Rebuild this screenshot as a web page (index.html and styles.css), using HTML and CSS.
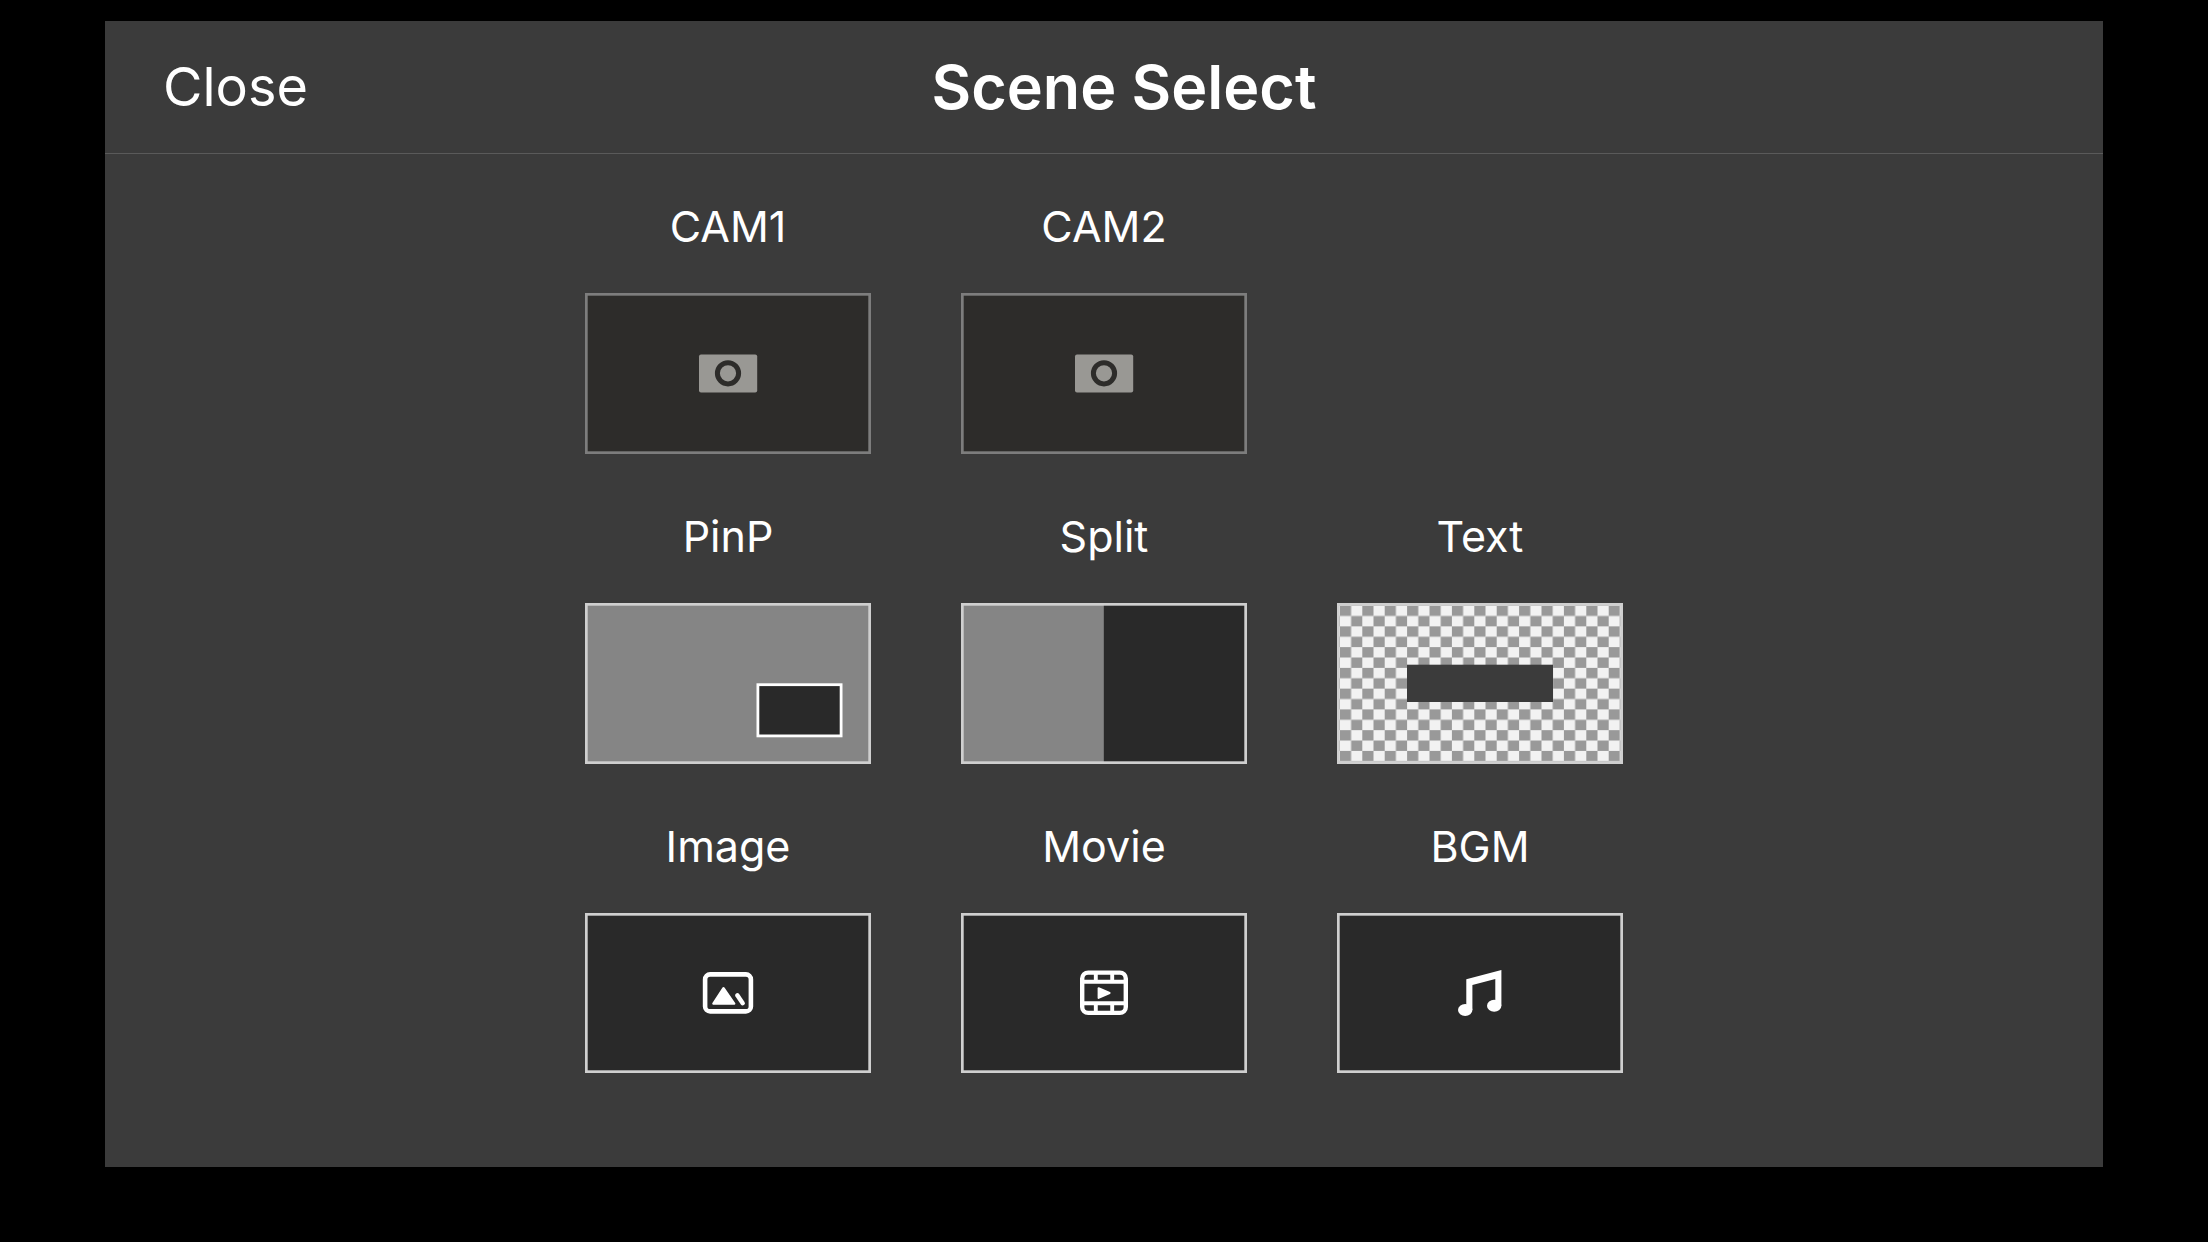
FILE: index.html
```html
<!DOCTYPE html>
<html lang="en">
<head>
<meta charset="utf-8">
<meta name="viewport" content="width=device-width, initial-scale=1">
<title>Scene Select</title>
<link rel="stylesheet" href="styles.css">
</head>
<body>
<main class="panel">
  <header class="bar">
    <button class="close" type="button">Close</button>
    <h1 class="title">Scene Select</h1>
  </header>
  <div class="scenes">
    <button class="scene" type="button">
      <span class="label">CAM1</span>
      <svg class="thumb" viewBox="0 0 286 161" aria-hidden="true">
        <rect class="frame frame-cam" x="1.35" y="1.35" width="283.3" height="158.3"/>
        <rect x="114" y="61.4" width="58.2" height="38.2" rx="2" fill="#999894"/>
        <circle cx="143" cy="80.3" r="10.6" fill="none" stroke="#2d2c2a" stroke-width="5"/>
      </svg>
    </button>
    <button class="scene" type="button">
      <span class="label">CAM2</span>
      <svg class="thumb" viewBox="0 0 286 161" aria-hidden="true">
        <rect class="frame frame-cam" x="1.35" y="1.35" width="283.3" height="158.3"/>
        <rect x="114" y="61.4" width="58.2" height="38.2" rx="2" fill="#999894"/>
        <circle cx="143" cy="80.3" r="10.6" fill="none" stroke="#2d2c2a" stroke-width="5"/>
      </svg>
    </button>
    <button class="scene row-start" type="button">
      <span class="label">PinP</span>
      <svg class="thumb" viewBox="0 0 286 161" aria-hidden="true">
        <rect class="frame frame-gray" x="1.35" y="1.35" width="283.3" height="158.3"/>
        <rect x="172.9" y="81.7" width="83.2" height="51.2" fill="#292929" stroke="#fff" stroke-width="2.8"/>
      </svg>
    </button>
    <button class="scene" type="button">
      <span class="label">Split</span>
      <svg class="thumb" viewBox="0 0 286 161" aria-hidden="true">
        <rect x="1" y="1" width="284" height="159" fill="#292929"/>
        <rect x="1" y="1" width="141.8" height="159" fill="#858585"/>
        <rect class="frame frame-open" x="1.35" y="1.35" width="283.3" height="158.3"/>
      </svg>
    </button>
    <button class="scene" type="button">
      <span class="label">Text</span>
      <svg class="thumb" viewBox="0 0 286 161" aria-hidden="true">
        <defs>
          <pattern id="checker" x="2.9" y="2.6" width="22.4" height="20.76" patternUnits="userSpaceOnUse">
            <rect width="22.4" height="20.76" fill="#f2f2f2"/>
            <rect width="11.2" height="10.38" fill="#999"/>
            <rect x="11.2" y="10.38" width="11.2" height="10.38" fill="#999"/>
          </pattern>
        </defs>
        <rect x="1" y="1" width="284" height="159" fill="url(#checker)"/>
        <rect class="frame frame-open" x="1.35" y="1.35" width="283.3" height="158.3"/>
        <rect x="70" y="61.7" width="146" height="37.3" fill="#3b3b3b"/>
      </svg>
    </button>
    <button class="scene" type="button">
      <span class="label">Image</span>
      <svg class="thumb" viewBox="0 0 286 161" aria-hidden="true">
        <rect class="frame" x="1.35" y="1.35" width="283.3" height="157.3"/>
        <rect x="120.1" y="61.4" width="45.8" height="37" rx="5" fill="none" stroke="#fff" stroke-width="4.6"/>
        <path d="M138.5 75.2 128.4 90.6H149.2Z" fill="#fff" stroke="#fff" stroke-width="2.4" stroke-linejoin="round"/>
        <path d="M152.3 82.3 157.7 90.3" stroke="#fff" stroke-width="4.4" stroke-linecap="round"/>
      </svg>
    </button>
    <button class="scene" type="button">
      <span class="label">Movie</span>
      <svg class="thumb" viewBox="0 0 286 161" aria-hidden="true">
        <rect class="frame" x="1.35" y="1.35" width="283.3" height="157.3"/>
        <rect x="121.2" y="59.6" width="43.6" height="40.3" rx="6" fill="none" stroke="#fff" stroke-width="4.4"/>
        <path d="M121 68.8H165M121 90.2H165M134.8 59V69M151.2 59V69M134.8 90V100M151.2 90V100" fill="none" stroke="#fff" stroke-width="3.9"/>
        <path d="M137.6 75.2V84.9L148.6 80Z" fill="#fff" stroke="#fff" stroke-width="2" stroke-linejoin="round"/>
      </svg>
    </button>
    <button class="scene" type="button">
      <span class="label">BGM</span>
      <svg class="thumb" viewBox="0 0 286 161" aria-hidden="true">
        <rect class="frame" x="1.35" y="1.35" width="283.3" height="157.3"/>
        <path d="M129.3 97V66.2L164.4 57V92.7H158.3V66L135.4 72V97Z" fill="#fff"/>
        <ellipse cx="128.2" cy="97" rx="7.2" ry="6" fill="#fff"/>
        <ellipse cx="157.2" cy="92.7" rx="7.2" ry="6" fill="#fff"/>
      </svg>
    </button>
  </div>
</main>
</body>
</html>
```
FILE: styles.css
```css
* {
  box-sizing: border-box;
}

body {
  display: flex;
  min-height: 100vh;
  margin: 0;
  padding: 21px 105px 75px;
  background: #000;
  color: #fff;
  font-family: Inter, "Liberation Sans", sans-serif;
}

button {
  margin: 0;
  padding: 0;
  border: 0;
  background: none;
  color: inherit;
  font: inherit;
  cursor: pointer;
}

.panel {
  flex: 1;
  min-width: 0;
  background: #3b3b3b;
}

.bar {
  display: grid;
  grid-template-columns: 1fr auto 1fr;
  align-items: center;
  min-height: 133px;
  padding: 0 18px 0 58px;
  border-bottom: 1px solid #5a5a5a;
}

.close {
  justify-self: start;
  font-size: 54px;
  line-height: 72px;
}

.title {
  margin: 0;
  font-size: 61px;
  font-weight: 600;
  line-height: 72px;
}

.scenes {
  display: grid;
  grid-template-columns: repeat(3, minmax(0, 286px));
  justify-content: center;
  gap: 52px 90px;
  padding: 42px 24px;
}

.scene {
  display: flex;
  flex-direction: column;
  gap: 37px;
}

.row-start {
  grid-column-start: 1;
}

.label {
  width: 100%;
  font-size: 43px;
  line-height: 60px;
  text-align: center;
}

.thumb {
  display: block;
  width: 100%;
}

.frame {
  fill: #292929;
  stroke: #cfcfcf;
  stroke-width: 2.7px;
}

.frame-cam {
  fill: #2d2c2a;
  stroke: #7d7d7d;
}

.frame-gray {
  fill: #858585;
}

.frame-open {
  fill: none;
}
```
